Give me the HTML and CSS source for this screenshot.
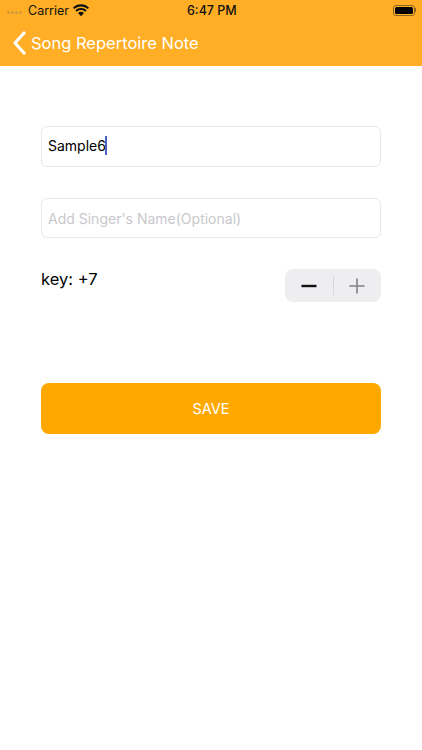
FILE: index.html
```html
<!DOCTYPE html>
<html lang="en">
<head>
    <meta charset="UTF-8">
    <meta name="viewport" content="width=device-width, initial-scale=1.0">
    <title>Song Repertoire Note</title>
    <link rel="stylesheet" href="styles.css">
</head>
<body>
    <header class="topbar">
        <div class="status">
            <div class="status-left">
                <div class="signal">
                    <span></span><span></span><span></span><span></span>
                </div>
                <span class="carrier">Carrier</span>
                <svg class="wifi" width="17" height="12" viewBox="0 0 17 12">
                    <path d="M8.5 2.2c2.4 0 4.6.9 6.3 2.500l1.300-1.400C14.100 1.300 11.400.2 8.500.2S2.900 1.300.9 3.300l1.300 1.400C3.900 3.100 6.100 2.200 8.500 2.200z" fill="#111"/>
                    <path d="M8.500 5.600c1.500 0 2.800.5 3.900 1.500l1.400-1.400C12.400 4.300 10.500 3.600 8.500 3.600s-3.900.7-5.300 2.100l1.400 1.400c1.100-1 2.400-1.500 3.900-1.500z" fill="#111"/>
                    <path d="M8.500 7.200c-1.100 0-2 .4-2.800 1.100l2.800 3.200 2.800-3.200c-.8-.7-1.700-1.100-2.800-1.100z" fill="#111"/>
                </svg>
            </div>
            <span class="time">6:47 PM</span>
            <div class="battery">
                <div class="battery-body"><div class="battery-fill"></div></div>
                <div class="battery-tip"></div>
            </div>
        </div>
        <nav class="nav">
            <svg class="back" width="14" height="24" viewBox="0 0 14 24">
                <path d="M12 2 L3 12 L12 22" fill="none" stroke="#fff" stroke-width="3.200" stroke-linecap="round" stroke-linejoin="round"/>
            </svg>
            <span class="nav-title">Song Repertoire Note</span>
        </nav>
    </header>

    <main class="form">
        <div class="field field-song">
            <span class="value">Sample6</span><span class="caret"></span>
        </div>
        <div class="field field-singer">
            <span class="placeholder">Add Singer's Name(Optional)</span>
        </div>
        <div class="key-row">
            <span class="key-label">key: +7</span>
            <div class="stepper">
                <div class="step">
                    <svg width="16" height="16" viewBox="0 0 16 16"><rect x="0.500" y="6.800" width="15" height="2.400" fill="#111"/></svg>
                </div>
                <div class="step-divider"></div>
                <div class="step">
                    <svg width="16" height="16" viewBox="0 0 16 16"><path d="M0.500 8h15M8 0.500v15" stroke="#808084" stroke-width="1.600" fill="none"/></svg>
                </div>
            </div>
        </div>
        <button class="save">SAVE</button>
    </main>
</body>
</html>
```

FILE: styles.css
```css
* {
    box-sizing: border-box;
}

body {
    font-family: Inter, "Liberation Sans", sans-serif;
    margin: 0;
    height: 750px;
    background: #fff;
    color: #000;
    overflow: hidden;
}

.topbar {
    height: 66px;
    background: #ffae26;
    padding-top: 1px;
}

.status {
    display: flex;
    align-items: center;
    justify-content: space-between;
    height: 18px;
    padding: 0 6px 0 7px;
    position: relative;
}

.status-left {
    display: flex;
    align-items: center;
}

.signal {
    display: flex;
    gap: 1px;
    margin-top: 4px;
    margin-right: 6px;
}

.signal span {
    width: 3px;
    height: 3px;
    border-radius: 50%;
    background: #d09a38;
}

.carrier {
    font-size: 12.500px;
    color: #111;
}

.wifi {
    margin-left: 3px;
    width: 18px;
    height: 13px;
}

.time {
    position: absolute;
    left: 187px;
    font-size: 12.500px;
    font-weight: 500;
    color: #111;
}

.battery {
    display: flex;
    align-items: center;
}

.battery-body {
    width: 22px;
    height: 11px;
    border: 1px solid #8a6420;
    border-radius: 3px;
    padding: 1px;
}

.battery-fill {
    height: 100%;
    background: #000;
    border-radius: 1.500px;
}

.battery-tip {
    width: 1.500px;
    height: 4px;
    background: #8a6420;
}

.nav {
    display: flex;
    align-items: center;
    height: 47px;
    padding: 1px 0 0 12px;
}

.nav-title {
    font-size: 16.500px;
    color: #fff;
    margin-left: 5px;
}

.form {
    padding: 60px 41px 0;
}

.field {
    display: flex;
    align-items: center;
    padding: 0 6px;
    margin-bottom: 31px;
    border: 1px solid #e8e8ea;
    border-radius: 6px;
    font-size: 14px;
}

.field-song {
    height: 41px;
    padding-bottom: 2px;
}

.field-singer {
    height: 40px;
}

.caret {
    width: 2px;
    height: 19px;
    margin-left: -1px;
    background: #4a64c0;
}

.placeholder {
    color: #c8c8cc;
}

.key-row {
    display: flex;
    justify-content: space-between;
    align-items: flex-start;
}

.key-label {
    font-size: 16.500px;
    line-height: 20px;
}

.stepper {
    display: flex;
    align-items: center;
    width: 96px;
    height: 33px;
    background: #eeeef0;
    border-radius: 8px;
}

.step {
    flex: 1;
    display: flex;
    justify-content: center;
}

.step-divider {
    width: 1px;
    height: 19px;
    background: #d8d8dc;
}

.save {
    display: block;
    width: 100%;
    height: 51px;
    margin-top: 81px;
    background: #ffa900;
    border: none;
    border-radius: 8px;
    color: #fff;
    font-family: inherit;
    font-size: 14.500px;
}
```
